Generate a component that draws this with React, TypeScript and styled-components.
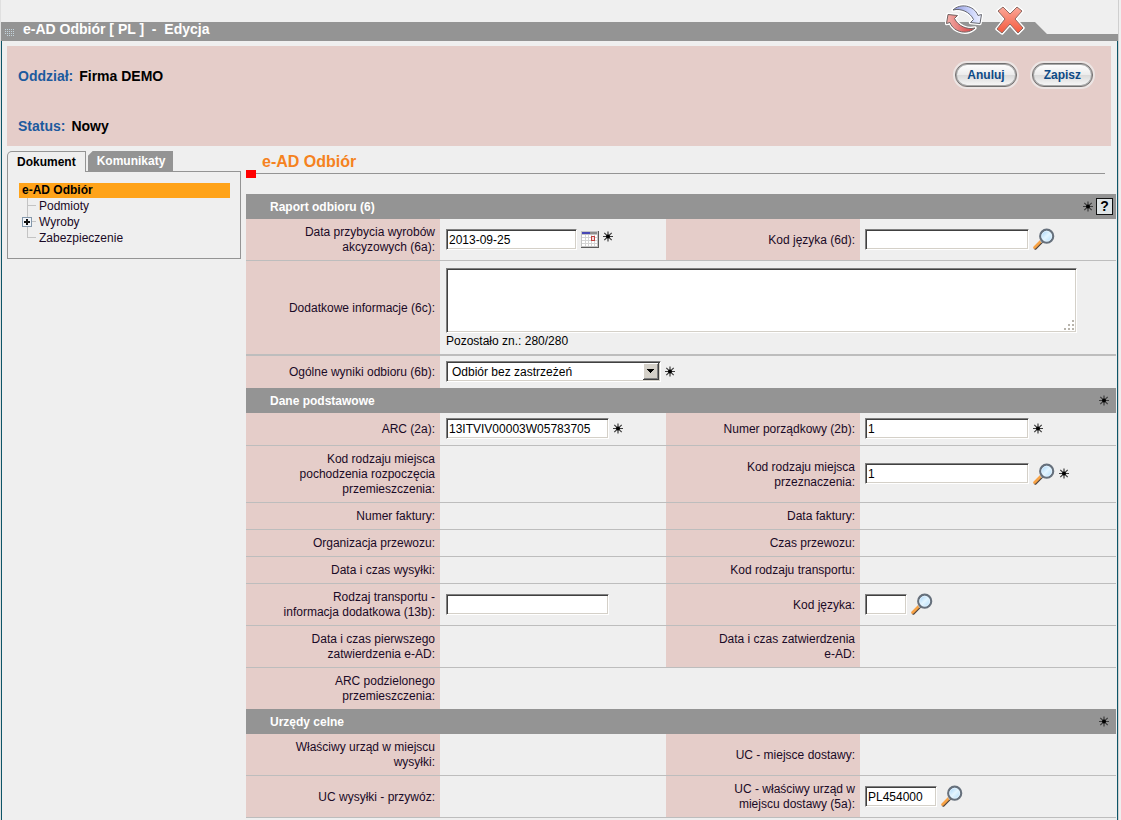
import React, { useEffect, useRef } from "react";
import styled, { createGlobalStyle, css } from "styled-components";

const color = {
  page: "#efefef",
  bar: "#949494",
  pink: "#e5cdc9",
  rule: "#bdbdbd",
  frame: "#0d5568",
  blue: "#1c5a9e",
  orange: "#f58220",
};

const GlobalStyle = createGlobalStyle`
  *, *::before, *::after { box-sizing: border-box; }
  body {
    margin: 0;
    background: ${color.page};
    color: #000;
    font: 12px/15px "Liberation Sans", Arial, sans-serif;
  }
  input, select, textarea, button { font: inherit; color: inherit; margin: 0; }
`;

/* ---------- page frame ---------- */

const Page = styled.div`
  min-height: 100vh;
  display: flex;
  flex-direction: column;
  margin-right: 3px;
  border-left: 1px solid #e0e0e0;
  box-shadow: 1px 0 0 #cfcfcf;
`;

const Header = styled.header`
  position: relative;
  padding-top: 22px;
`;

const TitleBar = styled.div`
  display: flex;
  align-items: center;
  gap: 8px;
  height: 19px;
  padding: 0 4px 4px;
  background: ${color.bar};
  clip-path: polygon(
    0 0,
    calc(100% - 83px) 0,
    calc(100% - 71px) 12px,
    100% 12px,
    100% 100%,
    0 100%
  );
  svg {
    align-self: flex-end;
  }
`;

const Title = styled.h1`
  margin: 0;
  color: #fff;
  font-size: 14px;
  line-height: 15px;
  white-space: pre;
`;

const Tools = styled.div`
  position: absolute;
  top: 4px;
  right: 93px;
  display: flex;
  gap: 12px;
`;

const IconButton = styled.button`
  display: flex;
  flex: none;
  padding: 0;
  border: 0;
  background: none;
  cursor: pointer;
`;

const Body = styled.div`
  flex: 1;
  border: solid ${color.frame};
  border-width: 0 1px;
`;

const Summary = styled.section`
  display: flex;
  justify-content: space-between;
  align-items: flex-start;
  margin: 5px 6px 5px 5px;
  height: 100px;
  padding: 17px 18px 0 11px;
  background: ${color.pink};
`;

const Facts = styled.dl`
  display: grid;
  gap: 24px;
  margin: 0;
  font-size: 14px;
  line-height: 26px;
  font-weight: bold;
`;

const Fact = styled.div`
  display: flex;
  gap: 6px;
  dt {
    color: ${color.blue};
  }
  dd {
    margin: 0;
  }
`;

const Actions = styled.div`
  display: flex;
  gap: 15px;
`;

const PillButton = styled.button`
  height: 24px;
  padding: 0 11px;
  border: 1px solid #6f6f6f;
  border-radius: 12px;
  background: linear-gradient(#fff 0, #ececec 48%, #d9d9d9 50%, #f8f8f8 100%);
  box-shadow:
    0 0 0 2px rgba(236, 232, 231, 0.9),
    inset 0 0 0 1px #a8a8a8;
  color: #0d4a86;
  font-weight: bold;
  cursor: pointer;
`;

const Columns = styled.div`
  display: grid;
  grid-template-columns: 234px minmax(0, 1fr);
  gap: 5px;
  padding: 0 1px 0 5px;
`;

/* ---------- sidebar ---------- */

const Tabs = styled.div`
  display: flex;
  gap: 2px;
`;

const Tab = styled.button<{ $active?: boolean }>`
  position: relative;
  height: 20px;
  padding: 1px 8px 0 9px;
  border: 0;
  background: ${color.bar};
  color: #fff;
  font-weight: bold;
  clip-path: polygon(0 5px, 5px 0, 100% 0, 100% 100%, 0 100%);
  ${(p) =>
    p.$active &&
    css`
      height: 21px;
      margin-bottom: -1px;
      padding: 0 9px;
      border: 1px solid ${color.bar};
      border-bottom: 0;
      border-radius: 5px 0 0 0;
      background: ${color.page};
      color: #000;
      clip-path: none;
      z-index: 1;
    `}
`;

const TreePanel = styled.nav`
  height: 88px;
  padding: 11px 10px 0 11px;
  border: 1px solid ${color.bar};
`;

const TreeRoot = styled.a`
  display: block;
  padding-left: 3px;
  background: #ffa319;
  color: #000;
  font-weight: bold;
  text-decoration: none;
`;

const TreeList = styled.ul`
  margin: 0;
  padding: 0;
  list-style: none;
`;

const TreeItem = styled.li`
  display: flex;
  align-items: center;
  gap: 2px;
  height: 16px;
  padding-left: 3px;
  a {
    color: #1a0a26;
    text-decoration: none;
  }
  svg {
    flex: none;
  }
`;

/* ---------- form ---------- */

const PageHeading = styled.div`
  display: grid;
  grid-template-columns: 10px 1fr;
  align-items: end;
  height: 27px;
  margin: 0 11px 16px 0;
  &::before {
    content: "";
    height: 8px;
    background: #f00;
  }
  h2 {
    margin: 0 0 4px;
    padding: 0 0 2px 6px;
    border-bottom: 1px solid ${color.bar};
    color: ${color.orange};
    font-size: 16px;
    line-height: 19px;
  }
`;

const SectionBar = styled.div<{ $help?: boolean }>`
  display: flex;
  align-items: center;
  gap: 3px;
  height: 25px;
  padding: 0 ${(p) => (p.$help ? 3 : 7)}px 0 24px;
  background: ${color.bar};
  h3 {
    flex: 1;
    margin: 0;
    padding-top: 1px;
    color: #fff;
    font-size: 12px;
  }
`;

const HelpButton = styled.button`
  width: 17px;
  height: 17px;
  padding: 0;
  border: 1px solid #111;
  background: #dfe4e6;
  font-size: 14px;
  line-height: 15px;
  font-weight: bold;
`;

const Row = styled.div<{ $wide?: boolean; $rule?: number }>`
  display: grid;
  grid-template-columns: ${(p) =>
    p.$wide ? "194px minmax(0, 1fr)" : "194px minmax(0, 226fr) 194px minmax(0, 256fr)"};
  border-bottom: ${(p) => p.$rule ?? 1}px solid ${color.rule};
`;

const Caption = styled.div`
  display: flex;
  align-items: center;
  justify-content: flex-end;
  padding: 6px 5px 5px 20px;
  background: ${color.pink};
  color: #1a0a26;
  text-align: right;
  white-space: pre-line;
`;

const Value = styled.div`
  display: flex;
  align-items: center;
  gap: 4px;
  padding: 5px 6px 6px;
  &:nth-child(4) {
    padding-left: 5px;
  }
`;

const sunken = css`
  border: 1px solid;
  border-color: #808080 #fff #fff #808080;
  border-radius: 0;
  background: #fff;
  box-shadow:
    inset 1px 1px 0 #404040,
    inset -1px -1px 0 #d4d0c8;
  outline: none;
`;

const TextInput = styled.input<{ $width: number }>`
  ${sunken}
  flex: none;
  width: ${(p) => p.$width}px;
  height: 21px;
  padding: 1px 2px 0;
`;

const NotesValue = styled.div`
  padding: 7px 39px 5px 6px;
`;

const NotesBox = styled.div`
  position: relative;
  height: 65px;
  margin-bottom: 1px;
  svg {
    position: absolute;
    right: 2px;
    bottom: 2px;
    pointer-events: none;
  }
`;

const Notes = styled.textarea`
  ${sunken}
  display: block;
  width: 100%;
  height: 65px;
  padding: 3px;
  resize: none;
`;

const SelectBox = styled.div`
  position: relative;
  svg {
    position: absolute;
    right: 2px;
    top: 2px;
    pointer-events: none;
  }
`;

const Select = styled.select`
  ${sunken}
  appearance: none;
  display: block;
  width: 215px;
  height: 21px;
  padding: 1px 20px 0 5px;
`;

const StarSvg = styled.svg<{ $raised?: boolean }>`
  flex: none;
  display: block;
  ${(p) => p.$raised && "align-self: flex-start; margin-top: 7px;"}
`;

/* ---------- drawings ---------- */

function Star({ raised }: { raised?: boolean }) {
  return (
    <StarSvg $raised={raised} width="10" height="11" viewBox="0 0 10 11" aria-hidden="true">
      <path
        d="M5 0.5V10.5M0 5.5H10M1.3 1.8L8.7 9.2M8.7 1.8L1.3 9.2"
        stroke="#3c3c3c"
        strokeWidth="1.2"
        fill="none"
      />
      <circle cx="5" cy="5.5" r="2" fill="#000" />
    </StarSvg>
  );
}

function Magnifier() {
  return (
    <svg width="22" height="22" viewBox="0 0 22 22" aria-hidden="true">
      <defs>
        <linearGradient id="lens" x1="0" y1="0" x2="1" y2="1">
          <stop offset="0" stopColor="#93caf6" />
          <stop offset="0.5" stopColor="#e4f5ff" />
          <stop offset="1" stopColor="#a4d6f9" />
        </linearGradient>
      </defs>
      <path d="M8.8 13.8L2.4 20.2" stroke="#4d423c" strokeWidth="3" strokeLinecap="round" />
      <path d="M7.8 13.2L1.6 19.4" stroke="#f7a245" strokeWidth="2.8" strokeLinecap="round" />
      <path d="M9.8 12L7.8 14" stroke="#b9bec4" strokeWidth="2.6" />
      <circle cx="13.7" cy="8.2" r="6.5" fill="url(#lens)" stroke="#66707c" strokeWidth="2.2" />
      <circle cx="13.7" cy="8.2" r="5" fill="none" stroke="#e6f4ff" strokeWidth="0.8" />
    </svg>
  );
}

function Calendar() {
  return (
    <svg width="18" height="17" viewBox="0 0 18 17" aria-hidden="true" shapeRendering="crispEdges">
      <rect width="18" height="17" fill="#5b5b5b" />
      <rect width="17" height="16" fill="#c4c4c4" />
      <rect x="1" y="4" width="15" height="11" fill="#fff" />
      <rect x="1" y="1" width="8" height="2" fill="#4747b5" />
      <rect x="9" y="1" width="7" height="2" fill="#8c8c8c" />
      <path
        d="M4 4h1v11h-1zM7 4h1v11h-1zM10 4h1v11h-1zM13 4h1v11h-1zM1 6h15v1H1zM1 9h15v1H1zM1 12h15v1H1z"
        fill="#d4d4d4"
      />
      <path d="M10 5h4v5h-4z" fill="#c0433f" />
      <path d="M11 6h2v3h-2z" fill="#f3dcdc" />
    </svg>
  );
}

const coolArrow =
  "M8 6C15 -1 29 1 33 11.5L36.5 10.5L35 19.5L25.5 18.5L28.5 15.5C25 8 16 4 8 6Z";
const warmArrow =
  "M30 24C23 31 9 29 5 18.5L1.5 19.5L3 10.5L12.5 11.5L9.5 14.5C13 22 22 26 30 24Z";

function RefreshIcon() {
  return (
    <svg width="38" height="31" viewBox="0 0 38 31" aria-hidden="true">
      <defs>
        <linearGradient id="cool" x1="0" x2="1">
          <stop offset="0" stopColor="#8f97dc" />
          <stop offset="0.6" stopColor="#c9d2fb" />
          <stop offset="1" stopColor="#eef1ff" />
        </linearGradient>
        <linearGradient id="warm" x1="0" x2="1">
          <stop offset="0" stopColor="#f4b0aa" />
          <stop offset="1" stopColor="#d23c3e" />
        </linearGradient>
      </defs>
      <g strokeLinejoin="round">
        <g fill="#fff" stroke="#fff" strokeWidth="3.4">
          <path d={coolArrow} />
          <path d={warmArrow} />
        </g>
        <path d={coolArrow} fill="url(#cool)" stroke="#66676f" />
        <path d={warmArrow} fill="url(#warm)" stroke="#6f6262" />
      </g>
    </svg>
  );
}

function CloseIcon() {
  const cross =
    "M3 7L8 3L15 10L22 3L27 7L20 15L28 24L23 29L15 20L7 29L2 25L10 15Z";
  return (
    <svg width="30" height="32" viewBox="0 0 30 32" aria-hidden="true">
      <defs>
        <linearGradient id="cross" x1="0" y1="0" x2="0" y2="1">
          <stop offset="0" stopColor="#fba99a" />
          <stop offset="1" stopColor="#f4583c" />
        </linearGradient>
      </defs>
      <path d={cross} fill="#fff" stroke="#fff" strokeWidth="3.4" strokeLinejoin="round" />
      <path d={cross} fill="url(#cross)" stroke="#8a6a64" strokeLinejoin="round" />
    </svg>
  );
}

function GripDots() {
  const dots: React.ReactNode[] = [];
  for (let y = 0; y < 4; y++)
    for (let x = 0; x < 5; x++)
      if (!(y === 3 && x === 0))
        dots.push(<rect key={`${x}-${y}`} x={x * 2} y={y * 2} width="1" height="1" />);
  return (
    <svg width="10" height="8" viewBox="0 0 10 8" fill="#c3d3dc" aria-hidden="true">
      {dots}
    </svg>
  );
}

function ResizeGrip() {
  return (
    <svg width="12" height="12" viewBox="0 0 12 12" fill="#b8b4ac" aria-hidden="true">
      <path d="M9 1h2v2h-2zM5 5h2v2h-2zM9 5h2v2h-2zM1 9h2v2h-2zM5 9h2v2h-2zM9 9h2v2h-2z" />
    </svg>
  );
}

function DropArrow() {
  return (
    <svg width="16" height="17" viewBox="0 0 16 17" shapeRendering="crispEdges" aria-hidden="true">
      <rect width="16" height="17" fill="#404040" />
      <rect width="15" height="16" fill="#fff" />
      <rect x="1" y="1" width="14" height="15" fill="#808080" />
      <rect x="1" y="1" width="13" height="14" fill="#d4d0c8" />
      <path d="M4 6H11V7H10V8H9V9H8V10H7V9H6V8H5V7H4Z" fill="#000" />
    </svg>
  );
}

function Branch({ last, expandable }: { last?: boolean; expandable?: boolean }) {
  return (
    <svg width="15" height="16" viewBox="0 0 15 16" shapeRendering="crispEdges" aria-hidden="true">
      <path d={`M5 0h1v${last ? 8 : 16}h-1zM5 7h9v1h-9z`} fill="#c3c3c3" />
      {expandable && (
        <>
          <path d="M0 3h10v10h-10z" fill="#8397ab" />
          <path d="M1 4h8v8h-8z" fill="#f2f5f9" />
          <path d="M4 5h2v6h-2zM2 7h6v2h-6z" fill="#111" />
        </>
      )}
    </svg>
  );
}

/* ---------- form parts ---------- */

type FieldProps = {
  id: string;
  caption: string;
  width?: number;
  value?: string;
  lookup?: boolean;
  calendar?: boolean;
  required?: boolean;
  focused?: boolean;
};

function Field({ id, caption, width, value, lookup, calendar, required, focused }: FieldProps) {
  const input = useRef<HTMLInputElement>(null);
  useEffect(() => {
    if (focused && input.current) {
      input.current.focus();
      input.current.setSelectionRange(99, 99);
    }
  }, [focused]);
  return (
    <>
      <Caption>{width ? <label htmlFor={id}>{caption}</label> : caption}</Caption>
      <Value>
        {width && <TextInput ref={input} id={id} $width={width} defaultValue={value} />}
        {calendar && (
          <IconButton type="button" aria-label="Kalendarz">
            <Calendar />
          </IconButton>
        )}
        {lookup && (
          <IconButton type="button" aria-label="Szukaj">
            <Magnifier />
          </IconButton>
        )}
        {required && <Star raised={calendar} />}
      </Value>
    </>
  );
}

function Section({ title, help }: { title: string; help?: boolean }) {
  return (
    <SectionBar $help={help}>
      <h3>{title}</h3>
      <Star />
      {help && <HelpButton type="button">?</HelpButton>}
    </SectionBar>
  );
}

export default function App() {
  return (
    <>
      <GlobalStyle />
      <Page>
        <Header>
          <TitleBar>
            <GripDots />
            <Title>{"e-AD Odbiór [ PL ]  -  Edycja"}</Title>
          </TitleBar>
          <Tools>
            <IconButton type="button" aria-label="Odśwież">
              <RefreshIcon />
            </IconButton>
            <IconButton type="button" aria-label="Zamknij">
              <CloseIcon />
            </IconButton>
          </Tools>
        </Header>
        <Body>
          <Summary>
            <Facts>
              <Fact>
                <dt>Oddział:</dt>
                <dd>Firma DEMO</dd>
              </Fact>
              <Fact>
                <dt>Status:</dt>
                <dd>Nowy</dd>
              </Fact>
            </Facts>
            <Actions>
              <PillButton type="button">Anuluj</PillButton>
              <PillButton type="submit">Zapisz</PillButton>
            </Actions>
          </Summary>
          <Columns>
            <aside>
              <Tabs>
                <Tab type="button" $active>
                  Dokument
                </Tab>
                <Tab type="button">Komunikaty</Tab>
              </Tabs>
              <TreePanel>
                <TreeRoot href="#raport">e-AD Odbiór</TreeRoot>
                <TreeList>
                  <TreeItem>
                    <Branch />
                    <a href="#podmioty">Podmioty</a>
                  </TreeItem>
                  <TreeItem>
                    <Branch expandable />
                    <a href="#wyroby">Wyroby</a>
                  </TreeItem>
                  <TreeItem>
                    <Branch last />
                    <a href="#zabezpieczenie">Zabezpieczenie</a>
                  </TreeItem>
                </TreeList>
              </TreePanel>
            </aside>
            <form>
              <PageHeading>
                <h2>e-AD Odbiór</h2>
              </PageHeading>

              <Section title="Raport odbioru (6)" help />
              <Row>
                <Field
                  id="f6a"
                  caption={"Data przybycia wyrobów\nakcyzowych (6a):"}
                  width={131}
                  value="2013-09-25"
                  calendar
                  required
                />
                <Field id="f6d" caption="Kod języka (6d):" width={164} lookup />
              </Row>
              <Row $wide $rule={2}>
                <Caption>
                  <label htmlFor="f6c">Dodatkowe informacje (6c):</label>
                </Caption>
                <NotesValue>
                  <NotesBox>
                    <Notes id="f6c" />
                    <ResizeGrip />
                  </NotesBox>
                  Pozostało zn.: 280/280
                </NotesValue>
              </Row>
              <Row $wide $rule={0}>
                <Caption>
                  <label htmlFor="f6b">Ogólne wyniki odbioru (6b):</label>
                </Caption>
                <Value>
                  <SelectBox>
                    <Select id="f6b" defaultValue="ok">
                      <option value="ok">Odbiór bez zastrzeżeń</option>
                    </Select>
                    <DropArrow />
                  </SelectBox>
                  <Star />
                </Value>
              </Row>

              <Section title="Dane podstawowe" />
              <Row>
                <Field id="f2a" caption="ARC (2a):" width={163} value="13ITVIV00003W05783705" required />
                <Field id="f2b" caption="Numer porządkowy (2b):" width={164} value="1" required />
              </Row>
              <Row>
                <Field id="origin" caption={"Kod rodzaju miejsca\npochodzenia rozpoczęcia\nprzemieszczenia:"} />
                <Field
                  id="dest"
                  caption={"Kod rodzaju miejsca\nprzeznaczenia:"}
                  width={164}
                  value="1"
                  lookup
                  required
                />
              </Row>
              <Row>
                <Field id="invno" caption="Numer faktury:" />
                <Field id="invdate" caption="Data faktury:" />
              </Row>
              <Row>
                <Field id="org" caption="Organizacja przewozu:" />
                <Field id="time" caption="Czas przewozu:" />
              </Row>
              <Row>
                <Field id="sent" caption="Data i czas wysyłki:" />
                <Field id="mode" caption="Kod rodzaju transportu:" />
              </Row>
              <Row>
                <Field id="f13b" caption={"Rodzaj transportu -\ninformacja dodatkowa (13b):"} width={163} />
                <Field id="lang" caption="Kod języka:" width={42} lookup />
              </Row>
              <Row>
                <Field id="first" caption={"Data i czas pierwszego\nzatwierdzenia e-AD:"} />
                <Field id="approved" caption={"Data i czas zatwierdzenia\ne-AD:"} />
              </Row>
              <Row $wide $rule={0}>
                <Field id="split" caption={"ARC podzielonego\nprzemieszczenia:"} />
              </Row>

              <Section title="Urzędy celne" />
              <Row>
                <Field id="office" caption={"Właściwy urząd w miejscu\nwysyłki:"} />
                <Field id="delivery" caption="UC - miejsce dostawy:" />
              </Row>
              <Row>
                <Field id="import" caption="UC wysyłki - przywóz:" />
                <Field
                  id="f5a"
                  caption={"UC - właściwy urząd w\nmiejscu dostawy (5a):"}
                  width={72}
                  value="PL454000"
                  lookup
                  focused
                />
              </Row>
            </form>
          </Columns>
        </Body>
      </Page>
    </>
  );
}
